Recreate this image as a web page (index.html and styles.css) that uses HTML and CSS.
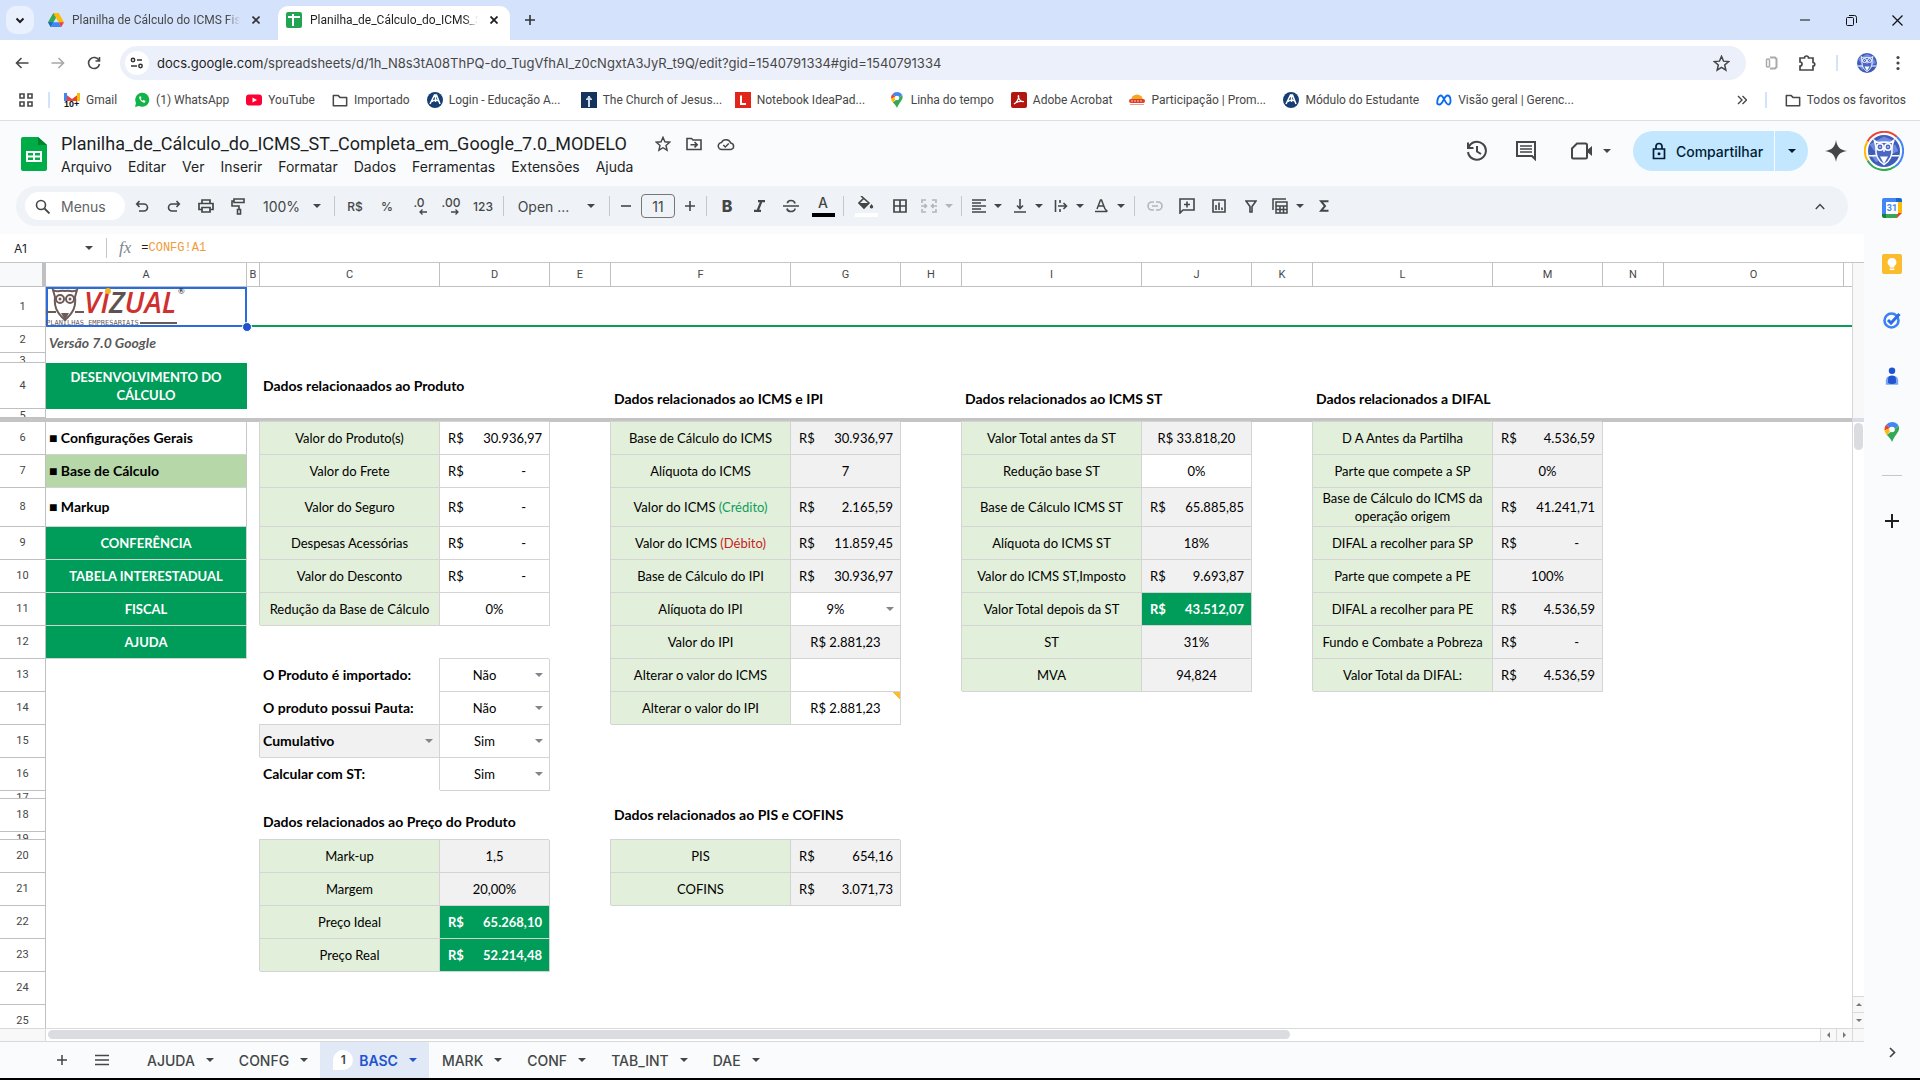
FILE: index.html
```html
<!DOCTYPE html>
<html lang="pt-BR">
<head>
  <meta charset="UTF-8">
  <title>Planilha_de_Cálculo_do_ICMS_ST_Completa_em_Google_7.0_MODELO</title>
  <link rel="stylesheet" href="styles.css">
</head>
<body>
  <!-- shared drawings -->
  <svg class="defs" aria-hidden="true">
    <symbol id="owl" viewBox="0 0 40 40">
      <circle cx="20" cy="20" r="20" fill="#3f5db8"/>
      <path d="M2 12 20 2l14 6-26 12zM4 26l30-14 4 8-28 14z" fill="#6f8be0"/>
      <path d="M1 26h11M28 26h11" stroke="#fff" stroke-width="2"/>
      <path d="M8 7c5 5 7 1 12 2 5-1 7 3 12-2-1 4-2 6-2 9 1 9-3 17-10 21-7-4-11-12-10-21 0-3-1-5-2-9z" fill="#4a67c4" stroke="#fff" stroke-width="2"/>
      <g fill="none" stroke="#fff" stroke-width="2"><circle cx="15" cy="15" r="4"/><circle cx="25" cy="15" r="4"/><path d="M20 16v5"/></g>
      <circle cx="15" cy="15" r="1" fill="#fff"/><circle cx="25" cy="15" r="1" fill="#fff"/>
      <path d="M15 27h10l-5 9z" fill="#fff"/>
    </symbol>
    <symbol id="pin" viewBox="0 0 16 20">
      <path d="M8 0a7.500 7.500 0 0 0-5.800 2.700L6 6z" fill="#4285f4"/>
      <path d="M8 0a7.500 7.500 0 0 1 6.500 3.700L9 8 5 5z" fill="#4285f4"/>
      <path d="M2.200 2.700C.8 4.400.3 6.200.6 8.500L6 6z" fill="#ea4335"/>
      <path d="M.6 8.500c.3 1.600 1 2.900 2.200 4.500L10 5 6 6z" fill="#fbbc04"/>
      <path d="M14.500 3.700C17 9 11 12 8 20c-1-3-3-5-5.200-7z" fill="#34a853"/>
      <circle cx="8" cy="7.500" r="2.800" fill="#fff"/>
    </symbol>
    <symbol id="folder" viewBox="0 0 18 16">
      <path d="M1.500 2.500h5.500l2 2h7.500v9.500h-15z" fill="none" stroke="#474747" stroke-width="1.700" stroke-linejoin="round"/>
    </symbol>
    <symbol id="star" viewBox="0 0 16 16">
      <path d="M8 1.300l1.900 4.500 4.800.4-3.700 3.200 1.100 4.800L8 11.700l-4.100 2.500L5 9.400 1.300 6.200l4.800-.4z" fill="none" stroke="#444746" stroke-width="1.400"/>
    </symbol>
    <symbol id="seal" viewBox="0 0 16 16">
      <circle cx="8" cy="8" r="8" fill="#153e75"/>
      <path d="M3 12 7.500 3h2l3.500 9M5 9.500c3-2 5-2 7 0M8.500 3v7" fill="none" stroke="#fff" stroke-width="1.500"/>
    </symbol>
  </svg>

  <div class="tabstrip">
    <button class="tab-search" aria-label="Pesquisar guias"><svg width="10" height="10" viewBox="0 0 10 10"><path d="M1.500 3.500 5 7l3.500-3.500" fill="none" stroke="#1f1f1f" stroke-width="2"/></svg></button>
    <div class="tab">
      <svg width="16" height="14" viewBox="0 0 16 14"><path d="M5.300 0h5.400l-2.700 4.700z" fill="#188038"/><path d="M5.300 0 8 4.700 2.700 14 0 9.300z" fill="#34a853"/><path d="M10.700 0 16 9.300h-5.300L5.300 0z" fill="#fbbc04"/><path d="M0 9.300h5.300L2.700 14z" fill="#1967d2"/><path d="M5.300 9.300h5.400l2.600 4.700H2.700z" fill="#4285f4"/><path d="M10.700 9.300H16L13.300 14z" fill="#ea4335"/></svg>
      <span class="tab-title">Planilha de Cálculo do ICMS Fiscal</span>
      <button class="tab-close" aria-label="Fechar"><svg width="8" height="8" viewBox="0 0 8 8"><path d="M.5.5l7 7M7.500.5l-7 7" stroke="#333" stroke-width="1.600"/></svg></button>
    </div>
    <div class="tab active">
      <svg width="16" height="16" viewBox="0 0 16 16"><rect width="16" height="16" rx="2" fill="#23a455"/><path d="M2 5h12M7 2v12" stroke="#fff" stroke-width="2"/></svg>
      <span class="tab-title">Planilha_de_Cálculo_do_ICMS_ST_Completa</span>
      <button class="tab-close" aria-label="Fechar"><svg width="8" height="8" viewBox="0 0 8 8"><path d="M.5.5l7 7M7.500.5l-7 7" stroke="#1f1f1f" stroke-width="1.800"/></svg></button>
    </div>
    <button class="new-tab" aria-label="Nova guia"><svg width="12" height="12" viewBox="0 0 12 12"><path d="M6 1v10M1 6h10" stroke="#333" stroke-width="1.600"/></svg></button>
    <div class="win-controls">
      <button aria-label="Minimizar"><svg width="10" height="10" viewBox="0 0 10 10"><path d="M0 5h10" stroke="#111"/></svg></button>
      <button aria-label="Restaurar"><svg width="11" height="11" viewBox="0 0 11 11"><path d="M.5 3.500a1 1 0 0 1 1-1h5a1 1 0 0 1 1 1v6a1 1 0 0 1-1 1h-5a1 1 0 0 1-1-1zM3 .5h5.500a2 2 0 0 1 2 2V8" fill="none" stroke="#111"/></svg></button>
      <button aria-label="Fechar janela"><svg width="11" height="11" viewBox="0 0 11 11"><path d="M.5.500l10 10M10.500.5l-10 10" stroke="#111" stroke-width="1.200"/></svg></button>
    </div>
  </div>

  <div class="navbar">
    <button class="nav-btn" aria-label="Voltar"><svg width="14" height="12" viewBox="0 0 14 12"><path d="M13.500 6H1.500M6.500 1l-5 5 5 5" fill="none" stroke="#474747" stroke-width="1.600"/></svg></button>
    <button class="nav-btn" aria-label="Avançar"><svg width="14" height="12" viewBox="0 0 14 12"><path d="M.5 6h12M7.500 1l5 5-5 5" fill="none" stroke="#a8a8a8" stroke-width="1.600"/></svg></button>
    <button class="nav-btn" aria-label="Atualizar"><svg width="14" height="14" viewBox="0 0 14 14"><path d="M12 4.500A5.500 5.500 0 1 0 12.500 8M12.500 1v4h-4" fill="none" stroke="#474747" stroke-width="1.600"/></svg></button>
    <div class="omnibox">
      <span class="site-info"><svg width="14" height="12" viewBox="0 0 14 12"><g fill="none" stroke="#333" stroke-width="1.500"><circle cx="3" cy="3" r="1.700"/><path d="M7 3h5M1 9h6"/><circle cx="10.500" cy="9" r="1.700"/></g></svg></span>
      <span class="url"><b>docs.google.com</b>/spreadsheets/d/1h_N8s3tA08ThPQ-do_TugVfhAI_z0cNgxtA3JyR_t9Q/edit?gid=1540791334#gid=1540791334</span>
      <svg width="17" height="17"><use href="#star"/></svg>
    </div>
    <div class="nav-right">
      <svg width="14" height="16" viewBox="0 0 14 16"><path d="M5 2.500h5l1.500 1.500v8L10 13.500H5" fill="none" stroke="#aaa" stroke-width="2"/><rect x="1.500" y="4" width="3" height="8" rx="1" fill="none" stroke="#aaa" stroke-width="1.500"/></svg>
      <svg width="18" height="18" viewBox="0 0 18 18"><path d="M2 4h4.500a2 2 0 0 1 4 0H15v4.500a1.500 1.500 0 0 1 0 3.500v4H2v-4a2 2 0 0 0 0-4z" fill="none" stroke="#474747" stroke-width="1.700"/></svg>
      <i class="divider"></i>
      <svg width="20" height="20"><use href="#owl"/></svg>
      <svg width="4" height="16" viewBox="0 0 4 16" fill="#474747"><circle cx="2" cy="2.500" r="1.600"/><circle cx="2" cy="8" r="1.600"/><circle cx="2" cy="13.500" r="1.600"/></svg>
    </div>
  </div>

  <nav class="bookmarks">
    <svg width="14" height="14" viewBox="0 0 14 14"><g fill="none" stroke="#474747" stroke-width="1.600"><path d="M1 1h4v4H1zM9 1h4v4H9zM1 9h4v4H1zM9 9h4v4H9z"/></g></svg>
    <i class="divider"></i>
    <a href="#"><svg width="16" height="16" viewBox="0 0 16 16"><path d="M0 1 8 7l8-6v8H0z" fill="#ea4335"/><path d="M0 1h3v8H0z" fill="#4285f4"/><path d="M13 1h3v8h-3z" fill="#fbbc04"/><text x="0" y="15" font-family="Liberation Sans" font-size="9" font-weight="bold" fill="#111">10+</text></svg><span>Gmail</span></a>
    <a href="#"><svg width="16" height="16" viewBox="0 0 16 16"><path d="M1 15l1-4a7 7 0 1 1 3 3z" fill="#12b347"/><path d="M5.500 4.500c-1.500 2 3 7 5.500 6l.5-1.500-2-1-1 .8C7.500 8.400 7 7.500 6.700 6.800l.8-.8-.8-1.700z" fill="#fff"/></svg><span>(1) WhatsApp</span></a>
    <a href="#"><svg width="16" height="16" viewBox="0 0 16 16"><rect y="2.500" width="16" height="11" rx="3" fill="#ff0033"/><path d="M6.500 5.500v5L11 8z" fill="#fff"/></svg><span>YouTube</span></a>
    <a href="#"><svg width="16" height="15"><use href="#folder"/></svg><span>Importado</span></a>
    <a href="#" class="cut"><svg width="16" height="16"><use href="#seal"/></svg><span>Login - Educação A...</span></a>
    <a href="#" class="cut"><svg width="16" height="16" viewBox="0 0 16 16"><rect width="16" height="16" fill="#16335c"/><path d="M7 4h2v11H7zM5 7l3-3 3 3v1H5z" fill="#cfdbea"/></svg><span>The Church of Jesus...</span></a>
    <a href="#" class="cut"><svg width="16" height="16" viewBox="0 0 16 16"><rect width="16" height="16" fill="#e1251b"/><path d="M6 3.500v8.500h5" fill="none" stroke="#fff" stroke-width="2"/></svg><span>Notebook IdeaPad...</span></a>
    <a href="#"><svg width="16" height="16"><use href="#pin"/></svg><span>Linha do tempo</span></a>
    <a href="#"><svg width="16" height="16" viewBox="0 0 16 16"><rect width="16" height="16" rx="2" fill="#b1160f"/><path d="M3 12c2-1 5-5 4.700-8-.2-1-.9 0 0 2 1 2.300 3 3.800 5.300 3.500M3 12c2-2 6-3 10-2.500" fill="none" stroke="#fff" stroke-width="1.200"/></svg><span>Adobe Acrobat</span></a>
    <a href="#" class="cut"><svg width="16" height="16" viewBox="0 0 16 16"><path d="M2 8.500a6 6 0 0 1 12 0z" fill="#f6a81c"/><rect y="7" width="16" height="4" rx="2" fill="#dd3b2b"/><path d="M2 9h12" stroke="#f9c9bd" stroke-dasharray="2 1"/><path d="M1 12.500h14" stroke="#ef9a8f"/></svg><span>Participação | Prom...</span></a>
    <a href="#"><svg width="16" height="16"><use href="#seal"/></svg><span>Módulo do Estudante</span></a>
    <a href="#" class="cut"><svg width="16" height="16" viewBox="0 0 16 16"><path d="M1.200 11c0-4 1.500-7.500 3.600-7.500C8 3.500 9 12.500 12.500 12.500c3 0 2.700-9-1-9C8 3.500 7 12.500 3.500 12.500 2 12.500 1.200 12 1.200 11z" fill="none" stroke="#0a6bf0" stroke-width="1.800"/></svg><span>Visão geral | Gerenc...</span></a>
    <div class="all-bookmarks">
      <svg width="10" height="10" viewBox="0 0 10 10"><path d="M1 1l4 4-4 4M5.500 1l4 4-4 4" fill="none" stroke="#474747" stroke-width="1.400"/></svg>
      <i class="divider"></i>
      <a href="#"><svg width="16" height="15"><use href="#folder"/></svg><span>Todos os favoritos</span></a>
    </div>
  </nav>

  <header class="doc-header">
    <svg width="26" height="34" viewBox="0 0 26 34"><path d="M2 0h15l9 8v24a2 2 0 0 1-2 2H2a2 2 0 0 1-2-2V2a2 2 0 0 1 2-2z" fill="#00ac47"/><path d="M17 0v8h9z" fill="#00832d"/><path d="M5 14h16v11H5z" fill="#fff"/><path d="M7 16h5v2.500H7zM14 16h5v2.500h-5zM7 20.500h5V23H7zM14 20.500h5V23h-5z" fill="#00ac47"/></svg>
    <div class="doc-names">
      <div class="doc-title">
        <h1>Planilha_de_Cálculo_do_ICMS_ST_Completa_em_Google_7.0_MODELO</h1>
        <svg width="16" height="16"><use href="#star"/></svg>
        <svg width="16" height="14" viewBox="0 0 16 14"><path d="M1 1.500h4.500L7 3h8v9.500H1zM4.500 7.700H11M8.500 5l2.700 2.700-2.700 2.700" fill="none" stroke="#444746" stroke-width="1.600"/></svg>
        <svg width="18" height="14" viewBox="0 0 18 14"><path d="M5 12.500a3.500 3.500 0 0 1-.5-7A5 5 0 0 1 13.700 6 3.300 3.300 0 0 1 14 12.500zM6.300 8l2 2 3.500-3.500" fill="none" stroke="#444746" stroke-width="1.500"/></svg>
      </div>
      <nav class="doc-menu">
        <a href="#">Arquivo</a><a href="#">Editar</a><a href="#">Ver</a><a href="#">Inserir</a><a href="#">Formatar</a><a href="#">Dados</a><a href="#">Ferramentas</a><a href="#">Extensões</a><a href="#">Ajuda</a>
      </nav>
    </div>
    <div class="doc-actions">
      <svg width="22" height="22" viewBox="0 0 22 22"><path d="M2.500 7.500A9 9 0 1 1 2 12M2 2.500v5.500h5.500M11 6v5.500l4 2.500" fill="none" stroke="#444746" stroke-width="2"/></svg>
      <svg width="20" height="20" viewBox="0 0 20 20"><path d="M1 1h18v17l-3-3H1z" fill="none" stroke="#444746" stroke-width="2"/><path d="M4 5h12M4 8h12M4 11h12" stroke="#444746" stroke-width="1.600"/></svg>
      <button class="meet" aria-label="Meet"><svg width="22" height="18" viewBox="0 0 22 18"><path d="M6 1.500h8.500a1.500 1.500 0 0 1 1.500 1.500v12a1.500 1.500 0 0 1-1.500 1.500H2A1 1 0 0 1 1 15.500V6.500z" fill="none" stroke="#444746" stroke-width="2"/><path d="M15 9l6-5v10z" fill="#444746"/></svg><i class="caret"></i></button>
      <div class="share">
        <button class="share-main"><svg width="14" height="18" viewBox="0 0 14 18"><path d="M1.500 7h11v9.500h-11zM4 7V4.500a3 3 0 0 1 6 0V7" fill="none" stroke="#001d35" stroke-width="1.700"/><circle cx="7" cy="11.700" r="1.500" fill="#001d35"/></svg>Compartilhar</button>
        <button class="share-more" aria-label="Mais opções"><i class="caret"></i></button>
      </div>
      <svg width="22" height="22" viewBox="0 0 22 22"><path d="M11 0c1 7 4 10 11 11-7 1-10 4-11 11-1-7-4-10-11-11 7-1 10-4 11-11z" fill="#444746"/></svg>
      <svg width="40" height="40" viewBox="0 0 40 40"><g fill="none" stroke-width="2"><path d="M3.500 10.500A19 19 0 0 1 33 6" stroke="#ea4335"/><path d="M33 6a19 19 0 0 1-2 29.500" stroke="#4285f4"/><path d="M31 35.500A19 19 0 0 1 3.500 29.500" stroke="#34a853"/><path d="M3.500 29.500a19 19 0 0 1 0-19" stroke="#fbbc04"/></g><use href="#owl" x="4" y="4" width="32" height="32"/></svg>
    </div>
  </header>

  <div class="workspace">
    <main class="editor">
      <div class="toolbar">
        <label class="menus"><svg width="15" height="15" viewBox="0 0 15 15"><circle cx="6" cy="6" r="4.500" fill="none" stroke="#444746" stroke-width="1.600"/><path d="M9.500 9.500l5 5" stroke="#444746" stroke-width="1.800"/></svg><input type="text" placeholder="Menus" aria-label="Menus"></label>
        <button class="tool" aria-label="Desfazer"><svg width="14" height="14" viewBox="0 0 14 14"><path d="M4.500 2 1.700 5l2.800 3M2 5h7a3.500 3.500 0 0 1 0 7H4" fill="none" stroke="#444746" stroke-width="1.600"/></svg></button>
        <button class="tool" aria-label="Refazer"><svg width="14" height="14" viewBox="0 0 14 14"><path d="M9.500 2l2.800 3-2.800 3M12 5H5a3.500 3.500 0 0 0 0 7h5" fill="none" stroke="#444746" stroke-width="1.600"/></svg></button>
        <button class="tool" aria-label="Imprimir"><svg width="16" height="14" viewBox="0 0 16 14"><path d="M4 4V1h8v3M4 10.500H1V4.500h14v6h-3M4 8.500h8V13H4z" fill="none" stroke="#444746" stroke-width="1.700"/></svg></button>
        <button class="tool" aria-label="Pintar formatação"><svg width="14" height="17" viewBox="0 0 14 17"><path d="M3 1h10v3.500H3zM3 3H1v5h7v3M6.500 11.500h3V16h-3z" fill="none" stroke="#444746" stroke-width="1.600"/></svg></button>
        <button class="tool zoom">100%<i class="caret"></i></button>
        <i class="sep"></i>
        <button class="tool small">R$</button>
        <button class="tool small">%</button>
        <button class="tool small dec">.0<svg width="8" height="6" viewBox="0 0 8 6"><path d="M8 3H1M3.500.5 1 3l2.500 2.500" fill="none" stroke="#444746" stroke-width="1.300"/></svg></button>
        <button class="tool small dec">.00<svg width="8" height="6" viewBox="0 0 8 6"><path d="M0 3h7M4.500.5 7 3 4.500 5.500" fill="none" stroke="#444746" stroke-width="1.300"/></svg></button>
        <button class="tool small">123</button>
        <i class="sep"></i>
        <button class="tool font">Open ...<i class="caret"></i></button>
        <i class="sep"></i>
        <button class="tool step" aria-label="Diminuir"><svg width="12" height="12" viewBox="0 0 12 12"><path d="M1 6h10" stroke="#444746" stroke-width="1.600"/></svg></button>
        <input class="size" type="text" value="11" aria-label="Tamanho da fonte">
        <button class="tool step" aria-label="Aumentar"><svg width="12" height="12" viewBox="0 0 12 12"><path d="M6 1v10M1 6h10" stroke="#444746" stroke-width="1.600"/></svg></button>
        <i class="sep"></i>
        <button class="tool bold">B</button>
        <button class="tool" aria-label="Itálico"><svg width="11" height="12" viewBox="0 0 11 12"><path d="M4 1.200h7M0 10.800h7M7.500 1l-4 10" fill="none" stroke="#444746" stroke-width="2.200"/></svg></button>
        <button class="tool" aria-label="Tachado"><svg width="16" height="14" viewBox="0 0 16 14"><path d="M0 7h16M12 4.500C11.500 2 9.500 1.500 8 1.500S4.500 2.300 4.500 4.300M4 9.500c.3 2 2.300 3 4 3s4-1 4-3" fill="none" stroke="#444746" stroke-width="1.700"/></svg></button>
        <button class="tool color">A<i class="swatch black"></i></button>
        <i class="sep"></i>
        <button class="tool color fill" aria-label="Cor de preenchimento"><svg width="16" height="14" viewBox="0 0 16 14"><path d="M3 0l8 7-5 5L1 7l5-5" fill="none" stroke="#444746" stroke-width="1.600"/><path d="M1 7h10l-5 5z" fill="#444746"/><path d="M13.500 8c1.500 2 2 2.500 1.600 3.500-.6 1.200-2.600 1.200-3.200 0-.4-1 .1-1.500 1.600-3.500z" fill="#444746"/></svg><i class="swatch white"></i></button>
        <button class="tool" aria-label="Bordas"><svg width="14" height="14" viewBox="0 0 14 14"><path d="M1 1h12v12H1zM7 1v12M1 7h12" fill="none" stroke="#444746" stroke-width="1.700"/></svg></button>
        <button class="tool drop faded" aria-label="Mesclar"><svg width="16" height="14" viewBox="0 0 16 14"><path d="M5 1H1v3M11 1h4v3M5 13H1v-3M11 13h4v-3M0 7h5M3.500 5l2 2-2 2M16 7h-5M12.500 5l-2 2 2 2" fill="none" stroke="#444746" stroke-width="1.600"/></svg><i class="caret"></i></button>
        <i class="sep"></i>
        <button class="tool drop" aria-label="Alinhar"><svg width="14" height="14" viewBox="0 0 14 14"><path d="M0 1h14M0 4h9M0 7h14M0 10h9M0 13h14" stroke="#444746" stroke-width="1.500"/></svg><i class="caret"></i></button>
        <button class="tool drop" aria-label="Alinhamento vertical"><svg width="14" height="14" viewBox="0 0 14 14"><path d="M7 0v9M4 6.500l3 3 3-3M1 13h12" fill="none" stroke="#444746" stroke-width="1.600"/></svg><i class="caret"></i></button>
        <button class="tool drop" aria-label="Ajuste"><svg width="14" height="14" viewBox="0 0 14 14"><path d="M1.500 1v12M6 1v3M6 10v3M4 7h8M9.500 4l3 3-3 3" fill="none" stroke="#444746" stroke-width="1.600"/></svg><i class="caret"></i></button>
        <button class="tool drop" aria-label="Rotação"><svg width="14" height="14" viewBox="0 0 14 14"><path d="M2 10 5.500 1h1L10 10M3.500 7h5M0 12.500h12M10 10l2.500 2.500" fill="none" stroke="#444746" stroke-width="1.500"/></svg><i class="caret"></i></button>
        <i class="sep"></i>
        <button class="tool faded" aria-label="Link"><svg width="16" height="10" viewBox="0 0 16 10"><path d="M7 1H5a4 4 0 0 0 0 8h2M9 1h2a4 4 0 0 1 0 8H9M5 5h6" fill="none" stroke="#444746" stroke-width="1.600"/></svg></button>
        <button class="tool" aria-label="Comentário"><svg width="16" height="16" viewBox="0 0 16 16"><path d="M1 1h14v11H4l-3 3zM8 3.500v6M5 6.500h6" fill="none" stroke="#444746" stroke-width="1.600"/></svg></button>
        <button class="tool" aria-label="Gráfico"><svg width="14" height="14" viewBox="0 0 14 14"><path d="M1 1h12v12H1zM4 6v5M7 3.500V11M10 8.500V11" fill="none" stroke="#444746" stroke-width="1.600"/></svg></button>
        <button class="tool" aria-label="Filtro"><svg width="12" height="13" viewBox="0 0 12 13"><path d="M1 1h10L7 6.500V12H5V6.500z" fill="none" stroke="#444746" stroke-width="1.600"/></svg></button>
        <button class="tool drop" aria-label="Tabela"><svg width="16" height="16" viewBox="0 0 16 16"><path d="M1 12V1h13M4 4h11v11H4zM4 8h11M8 8v7M11.500 8v7M4 11.500h11" fill="none" stroke="#444746" stroke-width="1.500"/></svg><i class="caret"></i></button>
        <button class="tool" aria-label="Funções"><svg width="10" height="12" viewBox="0 0 10 12"><path d="M9.500 1.200H2L6 6l-4 4.800h7.500" fill="none" stroke="#444746" stroke-width="2"/></svg></button>
        <button class="tool collapse" aria-label="Ocultar menus"><svg width="10" height="7" viewBox="0 0 10 7"><path d="M.8 6 5 1.500 9.200 6" fill="none" stroke="#444746" stroke-width="1.500"/></svg></button>
      </div>

      <div class="formula-bar">
        <button class="name-box">A1<i class="caret"></i></button>
        <span class="fx">fx</span>
        <code>=<b>CONFG!A1</b></code>
      </div>

      <div class="sheet">
        <div class="grid">
          <table>
            <colgroup>
              <col class="c-num"><col class="c-a"><col class="c-b"><col class="c-label"><col class="c-value"><col class="c-gap"><col class="c-label"><col class="c-value"><col class="c-gap"><col class="c-label"><col class="c-value"><col class="c-gap"><col class="c-label"><col class="c-value"><col class="c-gap"><col class="c-label"><col>
            </colgroup>
            <thead>
              <tr><th class="corner"></th><th>A</th><th>B</th><th>C</th><th>D</th><th>E</th><th>F</th><th>G</th><th>H</th><th>I</th><th>J</th><th>K</th><th>L</th><th>M</th><th>N</th><th>O</th><th class="last"></th></tr>
            </thead>
            <tbody>
              <tr class="r1"><th>1</th>
                <td class="selected">
                  <svg width="140" height="38" viewBox="0 0 140 38">
                    <g fill="none" stroke="#6b5a58" stroke-width="2"><path d="M0 24h10M29 24h9"/><path d="M7 2c4 3 7 0 12 1 5-1 8 2 12-1l-2 7c1 9-1 15-10 23C10 24 8 18 9 9z"/><circle cx="14" cy="11" r="4"/><circle cx="24" cy="11" r="4"/></g>
                    <circle cx="14" cy="11" r="1.500" fill="#6b5a58"/><circle cx="24" cy="11" r="1.500" fill="#6b5a58"/><path d="M15 25h8l-4 7z" fill="#6b5a58"/>
                    <text x="38" y="25" class="brand" fill="#cf3030">VI<tspan fill="#5f5351">Z</tspan>UAL</text>
                    <circle cx="62" cy="3" r="3" fill="#f7b520"/>
                    <text x="132" y="6" class="reg">®</text>
                    <text x="0" y="37" class="tagline">PLANILHAS EMPRESARIAIS</text>
                    <path d="M94 35h37" stroke="#6b5a58" stroke-width="2"/>
                  </svg>
                  <i class="handle"></i>
                </td>
                <td colspan="15" class="underline"></td></tr>
              <tr class="r2"><th>2</th><td class="version">Versão 7.0 Google</td><td colspan="15"></td></tr>
              <tr class="r3"><th><div>3</div></th><td colspan="16"></td></tr>
              <tr class="r4"><th>4</th><td class="menu-title">DESENVOLVIMENTO DO CÁLCULO</td><td></td><td colspan="2" class="section">Dados relacionaados ao Produto</td><td></td><td colspan="2" class="section low">Dados relacionados ao ICMS e IPI</td><td></td><td colspan="2" class="section low">Dados relacionados ao ICMS ST</td><td></td><td colspan="2" class="section low">Dados relacionados a DIFAL</td><td colspan="3"></td></tr>
              <tr class="r5"><th><div>5</div></th><td colspan="16"></td></tr>
              <tr class="freeze"><td colspan="17"></td></tr>
              <tr><th>6</th><td class="item">■ Configurações Gerais</td><td></td><td class="label">Valor do Produto(s)</td><td class="input"><div class="money"><span>R$</span><span>30.936,97</span></div></td><td></td><td class="label">Base de Cálculo do ICMS</td><td class="calc"><div class="money"><span>R$</span><span>30.936,97</span></div></td><td></td><td class="label">Valor Total antes da ST</td><td class="calc">R$ 33.818,20</td><td></td><td class="label">D A Antes da Partilha</td><td class="calc"><div class="money"><span>R$</span><span>4.536,59</span></div></td><td colspan="3"></td></tr>
              <tr><th>7</th><td class="item current">■ Base de Cálculo</td><td></td><td class="label">Valor do Frete</td><td class="input"><div class="money none"><span>R$</span><span>-</span></div></td><td></td><td class="label">Alíquota do ICMS</td><td class="calc">7</td><td></td><td class="label">Redução base ST</td><td class="input">0%</td><td></td><td class="label">Parte que compete a SP</td><td class="calc">0%</td><td colspan="3"></td></tr>
              <tr class="r8"><th>8</th><td class="item">■ Markup</td><td></td><td class="label">Valor do Seguro</td><td class="input"><div class="money none"><span>R$</span><span>-</span></div></td><td></td><td class="label">Valor do ICMS <span class="credit">(Crédito)</span></td><td class="calc"><div class="money"><span>R$</span><span>2.165,59</span></div></td><td></td><td class="label">Base de Cálculo ICMS ST</td><td class="calc"><div class="money"><span>R$</span><span>65.885,85</span></div></td><td></td><td class="label">Base de Cálculo do ICMS da operação origem</td><td class="calc"><div class="money"><span>R$</span><span>41.241,71</span></div></td><td colspan="3"></td></tr>
              <tr><th>9</th><td class="menu">CONFERÊNCIA</td><td></td><td class="label">Despesas Acessórias</td><td class="input"><div class="money none"><span>R$</span><span>-</span></div></td><td></td><td class="label">Valor do ICMS <span class="debit">(Débito)</span></td><td class="calc"><div class="money"><span>R$</span><span>11.859,45</span></div></td><td></td><td class="label">Alíquota do ICMS ST</td><td class="calc">18%</td><td></td><td class="label">DIFAL a recolher para SP</td><td class="calc"><div class="money none"><span>R$</span><span>-</span></div></td><td colspan="3"></td></tr>
              <tr><th>10</th><td class="menu">TABELA INTERESTADUAL</td><td></td><td class="label">Valor do Desconto</td><td class="input"><div class="money none"><span>R$</span><span>-</span></div></td><td></td><td class="label">Base de Cálculo do IPI</td><td class="calc"><div class="money"><span>R$</span><span>30.936,97</span></div></td><td></td><td class="label">Valor do ICMS ST,Imposto</td><td class="calc"><div class="money"><span>R$</span><span>9.693,87</span></div></td><td></td><td class="label">Parte que compete a PE</td><td class="calc">100%</td><td colspan="3"></td></tr>
              <tr><th>11</th><td class="menu">FISCAL</td><td></td><td class="label">Redução da Base de Cálculo</td><td class="input">0%</td><td></td><td class="label">Alíquota do IPI</td><td class="input"><div class="pick"><select aria-label="Alíquota do IPI"><option>9%</option></select></div></td><td></td><td class="label">Valor Total depois da ST</td><td class="total"><div class="money"><span>R$</span><span>43.512,07</span></div></td><td></td><td class="label">DIFAL a recolher para PE</td><td class="calc"><div class="money"><span>R$</span><span>4.536,59</span></div></td><td colspan="3"></td></tr>
              <tr><th>12</th><td class="menu">AJUDA</td><td colspan="4"></td><td class="label">Valor do IPI</td><td class="calc">R$ 2.881,23</td><td></td><td class="label">ST</td><td class="calc">31%</td><td></td><td class="label">Fundo e Combate a Pobreza</td><td class="calc"><div class="money none"><span>R$</span><span>-</span></div></td><td colspan="3"></td></tr>
              <tr><th>13</th><td colspan="2"></td><td class="section"><label for="importado">O Produto é importado:</label></td><td class="input"><div class="pick"><select id="importado"><option>Não</option><option>Sim</option></select></div></td><td></td><td class="label">Alterar o valor do ICMS</td><td class="input"></td><td></td><td class="label">MVA</td><td class="calc">94,824</td><td></td><td class="label">Valor Total da DIFAL:</td><td class="calc"><div class="money"><span>R$</span><span>4.536,59</span></div></td><td colspan="3"></td></tr>
              <tr><th>14</th><td colspan="2"></td><td class="section"><label for="pauta">O produto possui Pauta:</label></td><td class="input"><div class="pick"><select id="pauta"><option>Não</option><option>Sim</option></select></div></td><td></td><td class="label">Alterar o valor do IPI</td><td class="input note">R$ 2.881,23</td><td colspan="9"></td></tr>
              <tr><th>15</th><td colspan="2"></td><td class="calc"><div class="pick regime"><select aria-label="Regime"><option>Cumulativo</option></select></div></td><td class="input"><div class="pick"><select aria-label="Cumulativo"><option>Sim</option><option>Não</option></select></div></td><td colspan="12"></td></tr>
              <tr><th>16</th><td colspan="2"></td><td class="section"><label for="st">Calcular com ST:</label></td><td class="input"><div class="pick"><select id="st"><option>Sim</option><option>Não</option></select></div></td><td colspan="12"></td></tr>
              <tr class="thin"><th><div>17</div></th><td colspan="16"></td></tr>
              <tr><th>18</th><td colspan="2"></td><td colspan="2" class="section low">Dados relacionados ao Preço do Produto</td><td></td><td colspan="2" class="section">Dados relacionados ao PIS e COFINS</td><td colspan="9"></td></tr>
              <tr class="thin"><th><div>19</div></th><td colspan="16"></td></tr>
              <tr><th>20</th><td colspan="2"></td><td class="label">Mark-up</td><td class="calc">1,5</td><td></td><td class="label">PIS</td><td class="calc"><div class="money"><span>R$</span><span>654,16</span></div></td><td colspan="9"></td></tr>
              <tr><th>21</th><td colspan="2"></td><td class="label">Margem</td><td class="calc">20,00%</td><td></td><td class="label">COFINS</td><td class="calc"><div class="money"><span>R$</span><span>3.071,73</span></div></td><td colspan="9"></td></tr>
              <tr><th>22</th><td colspan="2"></td><td class="label">Preço Ideal</td><td class="total"><div class="money"><span>R$</span><span>65.268,10</span></div></td><td colspan="12"></td></tr>
              <tr><th>23</th><td colspan="2"></td><td class="label">Preço Real</td><td class="total"><div class="money"><span>R$</span><span>52.214,48</span></div></td><td colspan="12"></td></tr>
              <tr><th>24</th><td colspan="16"></td></tr>
              <tr><th>25</th><td colspan="16"></td></tr>
            </tbody>
          </table>
        </div>
        <div class="vscroll">
          <div class="vscroll-frozen"></div>
          <div class="vscroll-split"></div>
          <div class="vscroll-track"><i class="vthumb"></i></div>
          <button aria-label="Rolar para cima"><i class="tri up"></i></button>
          <button aria-label="Rolar para baixo"><i class="tri down"></i></button>
        </div>
      </div>
      <div class="hscroll">
        <div class="hscroll-corner"></div>
        <div class="hscroll-track"><i class="hthumb"></i></div>
        <button aria-label="Rolar para a esquerda"><i class="tri left"></i></button>
        <button aria-label="Rolar para a direita"><i class="tri right"></i></button>
        <div class="hscroll-end"></div>
      </div>
      <div class="sheet-tabs">
        <button class="sheet-add" aria-label="Adicionar página"><svg width="12" height="12" viewBox="0 0 12 12"><path d="M6 1v10M1 6h10" stroke="#444746" stroke-width="1.500"/></svg></button>
        <button class="sheet-list" aria-label="Todas as páginas"><svg width="14" height="12" viewBox="0 0 14 12"><path d="M0 1.500h14M0 6h14M0 10.500h14" stroke="#444746" stroke-width="1.500"/></svg></button>
        <button class="sheet-tab">AJUDA<i class="caret"></i></button>
        <button class="sheet-tab">CONFG<i class="caret"></i></button>
        <button class="sheet-tab on"><span class="badge">1</span>BASC<i class="caret"></i></button>
        <button class="sheet-tab">MARK<i class="caret"></i></button>
        <button class="sheet-tab">CONF<i class="caret"></i></button>
        <button class="sheet-tab">TAB_INT<i class="caret"></i></button>
        <button class="sheet-tab">DAE<i class="caret"></i></button>
      </div>
    </main>

    <aside class="side">
      <svg width="20" height="20" viewBox="0 0 20 20"><path d="M0 2a2 2 0 0 1 2-2h12v4H4v12H0z" fill="#4285f4"/><path d="M14 0h4a2 2 0 0 1 2 2v2h-6z" fill="#1967d2"/><path d="M16 4h4v11h-4z" fill="#fbbc04"/><path d="M4 16h11v4H4z" fill="#34a853"/><path d="M0 16h4v4H2a2 2 0 0 1-2-2z" fill="#188038"/><path d="M15 20v-5h5z" fill="#ea4335"/><path d="M4 4h12v12H4z" fill="#fff"/><text x="10" y="13" text-anchor="middle" font-family="Roboto" font-size="9" font-weight="bold" fill="#4285f4">31</text></svg>
      <svg width="20" height="20" viewBox="0 0 20 20"><rect width="20" height="20" rx="2" fill="#fbbc2e"/><path d="M10 4a4.300 4.300 0 0 0-2.300 8V13.500h4.600V12A4.300 4.300 0 0 0 10 4zM7.700 14.500h4.600V16H7.700z" fill="#fff"/></svg>
      <svg width="18" height="20" viewBox="0 0 18 18"><circle cx="8.500" cy="9.500" r="7" fill="none" stroke="#3b82f6" stroke-width="2.600"/><path d="M5 9l3 3 8.500-9" fill="none" stroke="#2b6de8" stroke-width="3"/></svg>
      <svg width="14" height="20" viewBox="0 0 16 20"><circle cx="8" cy="4" r="3.700" fill="#1f55cf"/><path d="M1 20v-5c0-3 2-5 5-5h4c3 0 5 2 5 5v5z" fill="#7ba2f5"/><path d="M3.500 18v-4a4.500 4.500 0 0 1 9 0v4c-2.500 1.500-6.500 1.500-9 0z" fill="#1f55cf"/></svg>
      <svg width="16" height="20"><use href="#pin"/></svg>
      <hr>
      <button aria-label="Instalar complementos"><svg width="14" height="14" viewBox="0 0 14 14"><path d="M7 0v14M0 7h14" stroke="#1f1f1f" stroke-width="2"/></svg></button>
      <button class="side-toggle" aria-label="Ocultar painel lateral"><svg width="7" height="11" viewBox="0 0 7 11"><path d="M1 1l4.500 4.500L1 10" fill="none" stroke="#444746" stroke-width="1.700"/></svg></button>
    </aside>
  </div>
</body>
</html>
```
FILE: styles.css
```css
* {
  box-sizing: border-box;
}
body {
  margin: 0;
  height: 100vh;
  display: flex;
  flex-direction: column;
  overflow: hidden;
  background: #f9fbfd;
  border-bottom: 2px solid #000;
  font-family: Inter, "Liberation Sans", sans-serif;
  font-size: 14px;
  color: #1f1f1f;
}
button {
  display: flex;
  align-items: center;
  justify-content: center;
  padding: 0;
  border: 0;
  background: none;
  color: inherit;
  font: inherit;
}
a {
  color: inherit;
  text-decoration: none;
}
svg {
  flex: none;
  display: block;
}
.defs {
  display: none;
}
.caret {
  width: 0;
  border: 4px solid transparent;
  border-top-color: #444746;
  border-bottom: 0;
}
.divider {
  width: 2px;
  height: 16px;
  background: #d3e3fd;
}

/* browser tabs */
.tabstrip {
  display: flex;
  flex: none;
  height: 40px;
  background: #d5e2fc;
  font-family: Roboto, sans-serif;
  font-size: 12px;
}
.tab-search {
  width: 28px;
  height: 28px;
  margin: 6px 8px 0 6px;
  border-radius: 10px;
  background: #e9f1fe;
}
.tab {
  display: flex;
  align-items: center;
  width: 232px;
  margin-top: 6px;
  height: 28px;
  padding-left: 6px;
  color: #474747;
}
.tab.active {
  height: 34px;
  padding: 0 8px 6px;
  margin-left: 4px;
  border-radius: 10px 10px 0 0;
  background: #fff;
  color: #1f1f1f;
}
.tab-title {
  width: 168px;
  margin-left: 8px;
  overflow: hidden;
  white-space: nowrap;
  line-height: 16px;
  -webkit-mask-image: linear-gradient(to right, #000 92%, transparent);
  mask-image: linear-gradient(to right, #000 92%, transparent);
}
.tab-close {
  width: 16px;
  height: 16px;
  margin-left: 8px;
}
.new-tab {
  width: 28px;
  height: 28px;
  margin: 6px 0 0 6px;
}
.win-controls {
  display: flex;
  margin-left: auto;
}
.win-controls button {
  width: 46px;
}

/* address bar */
.navbar {
  display: flex;
  align-items: center;
  flex: none;
  height: 46px;
  padding-left: 4px;
  background: #fff;
}
.nav-btn {
  width: 36px;
  height: 34px;
}
.omnibox {
  display: flex;
  align-items: center;
  flex: 1;
  height: 34px;
  margin-left: 8px;
  padding: 0 16px 0 5px;
  border-radius: 17px;
  background: #ecf0fa;
}
.site-info {
  display: flex;
  align-items: center;
  justify-content: center;
  width: 24px;
  height: 24px;
  border-radius: 50%;
  background: #fff;
}
.url {
  flex: 1;
  margin-left: 8px;
  font-size: 13px;
  color: #474747;
}
.url b {
  font-weight: normal;
  color: #1f1f1f;
}
.nav-right {
  display: flex;
  align-items: center;
  justify-content: space-between;
  width: 174px;
  padding: 0 20px 0 19px;
}

/* bookmarks */
.bookmarks {
  display: flex;
  align-items: center;
  flex: none;
  height: 35px;
  padding: 0 14px 6px 19px;
  border-bottom: 1px solid #dcdfe4;
  background: #fff;
  font-family: Roboto, sans-serif;
  font-size: 12px;
  color: #474747;
}
.bookmarks a {
  display: flex;
  align-items: center;
  gap: 6px;
  margin-left: 17px;
  white-space: nowrap;
}
.bookmarks > .divider {
  margin: 0 -3px 0 15px;
}
.bookmarks .cut span {
  width: 115px;
}
.all-bookmarks {
  display: flex;
  align-items: center;
  gap: 18px;
  margin-left: auto;
}
.all-bookmarks a {
  margin-left: 0;
}

/* document header */
.doc-header {
  display: flex;
  align-items: center;
  flex: none;
  height: 65px;
  padding: 0 16px 0 21px;
}
.doc-names {
  margin-left: 14px;
  padding-top: 2px;
}
.doc-title {
  display: flex;
  align-items: center;
  gap: 15px;
}
.doc-title h1 {
  margin: 0 13px 0 0;
  font-family: Roboto, sans-serif;
  font-size: 18px;
  font-weight: normal;
  line-height: 24px;
}
.doc-menu {
  display: flex;
  gap: 16px;
  margin-top: 1px;
  line-height: 20px;
}
.doc-actions {
  display: flex;
  align-items: center;
  margin: -5px 0 0 auto;
}
.doc-actions svg + svg {
  margin-left: 28px;
}
.meet {
  gap: 10px;
  margin-left: 35px;
}
.share {
  display: flex;
  gap: 1px;
  height: 40px;
  margin: 0 17px 0 22px;
}
.share button {
  border-radius: 0 20px 20px 0;
  background: #c2e7ff;
  color: #001d35;
  font-weight: 500;
}
.share .share-main {
  gap: 10px;
  width: 141px;
  padding-left: 8px;
  border-radius: 20px 0 0 20px;
}
.share .share-more {
  width: 33px;
}
.share .caret {
  border-top-color: #001d35;
}
.doc-actions .share ~ svg + svg {
  margin-left: 17px;
}

/* toolbar */
.workspace {
  display: flex;
  flex: 1;
  min-height: 0;
}
.editor {
  display: flex;
  flex-direction: column;
  flex: 1;
  min-width: 0;
}
.toolbar {
  display: flex;
  align-items: center;
  flex: none;
  height: 40px;
  margin: 0 16px 8px;
  padding: 0 12px 0 9px;
  border-radius: 20px;
  background: #eff3f8;
  color: #444746;
}
.menus {
  display: flex;
  align-items: center;
  gap: 11px;
  width: 100px;
  height: 28px;
  margin-right: 1px;
  padding-left: 10px;
  border-radius: 14px;
  background: #fff;
}
.menus input {
  width: 60px;
  padding: 0;
  border: 0;
  background: none;
  font: inherit;
}
.menus input::placeholder {
  color: #5f6368;
}
.tool {
  flex: none;
  width: 32px;
  height: 28px;
}
.tool.zoom {
  width: 76px;
  gap: 13px;
}
.tool.small {
  font-size: 12px;
  font-weight: 500;
}
.tool.dec {
  flex-direction: column;
  align-items: center;
  line-height: 12px;
}
.tool.dec svg {
  margin-left: 8px;
}
.tool.font {
  width: 97px;
  gap: 18px;
}
.tool.step {
  width: 24px;
}
.tool.bold {
  font-size: 16px;
  font-weight: 800;
}
.tool.color {
  flex-direction: column;
  font-size: 14px;
  font-weight: 500;
  line-height: 14px;
}
.tool.fill {
  width: 36px;
}
.swatch {
  width: 23px;
  height: 4px;
  margin-top: 3px;
}
.black {
  background: #000;
}
.white {
  background: #fff;
}
.tool.drop {
  width: 41px;
  gap: 8px;
}
.faded {
  opacity: 0.35;
}
.tool.collapse {
  margin-left: auto;
}
.sep {
  flex: none;
  width: 1px;
  height: 20px;
  margin: 0 4px;
  background: #c7c7c7;
}
.size {
  width: 34px;
  height: 24px;
  margin: 0 3px;
  padding: 0;
  border: 1px solid #747775;
  border-radius: 4px;
  background: none;
  color: #444746;
  font: inherit;
  text-align: center;
}

/* formula bar */
.formula-bar {
  display: flex;
  align-items: center;
  flex: none;
  height: 28px;
  background: #fff;
}
.name-box {
  justify-content: space-between;
  width: 107px;
  height: 20px;
  padding: 0 13px 0 14px;
  border-right: 1px solid #c7c7c7;
  font-size: 12px;
}
.fx {
  margin: 0 10px 0 12px;
  font-family: "Liberation Serif", serif;
  font-size: 17px;
  font-style: italic;
  color: #80868b;
}
.formula-bar code {
  font-family: "Liberation Mono", monospace;
  font-size: 12px;
}
.formula-bar b {
  font-weight: normal;
  color: #f29a38;
}

/* spreadsheet */
.sheet {
  display: flex;
  flex: 1;
  min-height: 0;
  border-top: 1px solid #c4c7c5;
  background: #fff;
}
.grid {
  flex: 1;
  min-width: 0;
  overflow: hidden;
}
table {
  width: 100%;
  table-layout: fixed;
  border-spacing: 0;
  font-family: Lato, sans-serif;
  font-size: 13px;
  line-height: 18px;
  color: #000;
}
.c-num { width: 46px; }
.c-a { width: 201px; }
.c-b { width: 13px; }
.c-label { width: 180px; }
.c-value { width: 110px; }
.c-gap { width: 61px; }
tr {
  height: 33px;
}
th, td {
  padding: 0 3px;
}
th {
  padding: 0;
  border-right: 1px solid #c0c0c0;
  border-bottom: 1px solid #c0c0c0;
  font-family: Roboto, sans-serif;
  font-size: 11px;
  font-weight: normal;
  color: #444746;
}
th div {
  height: 8px;
  overflow: hidden;
  line-height: 13px;
}
thead tr {
  height: 24px;
}
thead .corner {
  border-right: 4px solid #c0c0c0;
  background: #f8f9fa;
}
thead .last {
  border-right: 0;
}
.r1 { height: 40px; }
.r2 { height: 26px; }
.r3 { height: 10px; }
.r4 { height: 46px; }
.r5 { height: 9px; }
.r8 { height: 39px; }
.thin { height: 8px; }
.thin div {
  height: 7px;
}
.freeze {
  height: 4px;
}
.freeze td {
  padding: 0;
  background: #c4c4c4;
}
.selected {
  position: relative;
  padding: 0;
  box-shadow: inset 0 0 0 2px #2a6ce0;
}
.handle {
  position: absolute;
  right: -5px;
  bottom: -5px;
  width: 10px;
  height: 10px;
  border: 1px solid #fff;
  border-radius: 50%;
  background: #2253cf;
}
.brand {
  font: italic 600 29px "Open Sans", sans-serif;
}
.reg {
  font-size: 8px;
}
.tagline {
  font: 7px "DejaVu Sans Mono", monospace;
  fill: #6b5a58;
}
.underline {
  border-bottom: 2px solid #0a9c5b;
}
.version {
  padding-bottom: 1px;
  vertical-align: bottom;
  font-size: 14px;
  font-style: italic;
  font-weight: bold;
  color: #595959;
}
.section {
  padding-bottom: 1px;
  font-size: 14px;
  font-weight: bold;
  white-space: nowrap;
}
.low {
  vertical-align: bottom;
}
.menu-title, .menu, .total {
  border-right: 1px solid #d0d4d0;
  border-bottom: 1px solid #d0d4d0;
  background: #009c5a;
  color: #fff;
  font-weight: bold;
  text-align: center;
}
.menu-title {
  padding: 0 20px;
  border-color: #009c5a;
}
.item {
  border-right: 1px solid #c8c8c8;
  border-bottom: 1px solid #d0d4d0;
  font-size: 14px;
  font-weight: bold;
}
.current {
  background: #b6d7a8;
}
.label, .calc, .input {
  border-right: 1px solid #d4d4d4;
  border-bottom: 1px solid #d4d4d4;
  box-shadow: -1px -1px 0 #d4d4d4;
  text-align: center;
}
.label {
  background: #e2efda;
}
.calc {
  background: #f1f1f1;
}
.money {
  display: flex;
  justify-content: space-between;
  padding: 0 4px 0 5px;
}
.money.none {
  padding-right: 20px;
}
.credit {
  color: #109d5b;
}
.debit {
  color: #c9211e;
}
.pick {
  position: relative;
}
.pick select {
  appearance: none;
  width: 100%;
  padding: 0 20px 0 0;
  border: 0;
  background: none;
  color: inherit;
  font: inherit;
  text-align-last: center;
}
.pick::after {
  content: "";
  position: absolute;
  top: 7px;
  right: 3px;
  border: 4px solid transparent;
  border-top-color: #80868b;
  border-bottom: 0;
}
.regime select {
  font-size: 14px;
  font-weight: bold;
  text-align-last: left;
}
.note {
  background: linear-gradient(to bottom left, #fbbc2e 50%, transparent 50%) top right / 8px 8px no-repeat;
}

/* scrollbars */
.vscroll, .hscroll {
  display: flex;
  flex: none;
  background: #fff;
}
.vscroll {
  flex-direction: column;
  width: 12px;
  border-left: 1px solid #d9d9d9;
}
.vscroll-frozen {
  height: 155px;
  background: #f8f8f8;
}
.vscroll-split {
  height: 4px;
  background: #d9dde8;
}
.vscroll-track {
  flex: 1;
}
.vthumb {
  display: block;
  width: 9px;
  height: 27px;
  margin: 1px;
  border-radius: 5px;
  background: #dadce0;
}
.vscroll button {
  height: 16px;
  border-top: 1px solid #d9d9d9;
  background: #f8f8f8;
}
.hscroll {
  height: 14px;
  border-top: 1px solid #d9d9d9;
  border-bottom: 1px solid #d9d9d9;
}
.hscroll-corner {
  width: 46px;
  border-right: 1px solid #d9d9d9;
  background: #f8f8f8;
}
.hscroll-track {
  flex: 1;
}
.hthumb {
  display: block;
  width: 70%;
  height: 9px;
  margin: 1px 2px;
  border-radius: 5px;
  background: #dadce0;
}
.hscroll button {
  width: 16px;
  border-left: 1px solid #d9d9d9;
  background: #f8f8f8;
}
.hscroll-end {
  width: 12px;
  border-left: 1px solid #d9d9d9;
  background: #f8f8f8;
}
.tri {
  border: 3px solid transparent;
}
.tri.up { border-bottom-color: #777; border-top: 0; }
.tri.down { border-top-color: #777; border-bottom: 0; }
.tri.left { border-right-color: #777; border-left: 0; }
.tri.right { border-left-color: #777; border-right: 0; }

/* sheet tabs */
.sheet-tabs {
  display: flex;
  flex: none;
  height: 36px;
  padding-left: 42px;
  font-weight: 500;
  color: #444746;
}
.sheet-add, .sheet-list {
  width: 40px;
}
.sheet-list {
  margin-right: 12px;
}
.sheet-tab {
  gap: 11px;
  padding: 0 12px 0 13px;
}
.sheet-tab.on {
  background: #e1e9f7;
  color: #2253cf;
  font-weight: 600;
}
.on .caret {
  border-top-color: #2253cf;
}
.badge {
  width: 20px;
  margin-right: -5px;
  border-radius: 10px 10px 10px 0;
  background: #fff;
  color: #444746;
  font-size: 12px;
  line-height: 20px;
}

/* side panel */
.side {
  display: flex;
  flex-direction: column;
  align-items: center;
  width: 56px;
  padding: 12px 0 20px;
  gap: 36px;
}
.side hr {
  width: 20px;
  margin: -3px 0 2px;
  border: 0;
  border-top: 1px solid #c7c7c7;
}
.side-toggle {
  margin-top: auto;
}
```
